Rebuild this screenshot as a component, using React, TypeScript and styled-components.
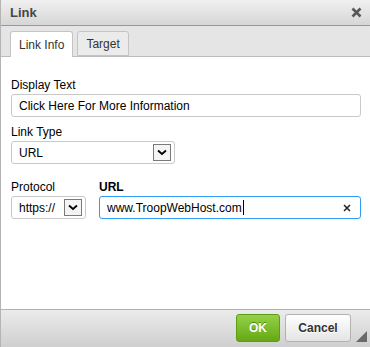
import React from 'react';
import styled, { createGlobalStyle } from 'styled-components';

const GlobalStyle = createGlobalStyle`
  html, body {
    margin: 0;
    padding: 0;
    background: #fff;
  }
  body {
    font-family: "Liberation Sans", Arial, sans-serif;
    font-size: 12px;
    color: #000;
  }
`;

const Dialog = styled.div`
  display: flex;
  flex-direction: column;
  width: 370px;
  height: 347px;
  box-sizing: border-box;
  border-left: 1px solid #b4b4b4;
  overflow: hidden;
`;

const TitleBar = styled.div`
  display: flex;
  align-items: center;
  justify-content: space-between;
  height: 25px;
  padding: 0 8px 0 9px;
  background: linear-gradient(to bottom, #f0f0f0, #d6d6d6);
  border-bottom: 1px solid #999;
`;

const Title = styled.div`
  font-size: 13px;
  font-weight: bold;
  color: #474747;
`;

const TabBar = styled.div`
  display: flex;
  align-items: flex-end;
  gap: 4px;
  height: 30px;
  padding-left: 9px;
  background: #e5e5e5;
  border-bottom: 1px solid #bcbcbc;
`;

const Tab = styled.div<{ active?: boolean }>`
  display: flex;
  align-items: center;
  box-sizing: border-box;
  height: ${({ active }) => (active ? '26px' : '25px')};
  margin-bottom: ${({ active }) => (active ? '-1px' : '0')};
  padding: 0 8px;
  border: 1px solid #c4c4c4;
  border-bottom: ${({ active }) => (active ? 'none' : '1px solid #c4c4c4')};
  border-radius: 3px 3px 0 0;
  background: ${({ active }) => (active ? '#fff' : '#ebebeb')};
  color: #333;
  font-size: 12px;
`;

const Content = styled.div`
  flex: 1;
  display: flex;
  flex-direction: column;
  padding: 21px 9px 0 10px;
  background: #fff;
`;

const Field = styled.div`
  display: flex;
  flex-direction: column;
  margin-bottom: 8px;
`;

const Label = styled.div<{ bold?: boolean }>`
  line-height: 14px;
  margin-bottom: 2px;
  font-weight: ${({ bold }) => (bold ? 'bold' : 'normal')};
  color: #000;
`;

const TextBox = styled.div<{ focused?: boolean }>`
  display: flex;
  align-items: center;
  box-sizing: border-box;
  height: 23px;
  padding: 0 7px;
  border: 1px solid ${({ focused }) => (focused ? '#2f9cf5' : '#c9c9c9')};
  border-radius: 3px;
  background: #fff;
  color: #000;
`;

const Caret = styled.span`
  display: inline-block;
  width: 1px;
  height: 15px;
  background: #000;
  margin-left: 1px;
`;

const Clear = styled.span`
  margin-left: auto;
  margin-right: 2px;
  display: flex;
`;

const Select = styled.div<{ width: number }>`
  display: flex;
  align-items: center;
  justify-content: space-between;
  box-sizing: border-box;
  width: ${({ width }) => width}px;
  height: 23px;
  padding: 0 3px 0 7px;
  border: 1px solid #c9c9c9;
  border-radius: 3px;
  background: #fff;
`;

const ArrowBox = styled.span`
  display: flex;
  align-items: center;
  justify-content: center;
  box-sizing: border-box;
  width: 18px;
  height: 17px;
  border: 1px solid #7a7a7a;
  background: #f4f4f4;
`;

const Row = styled.div`
  display: flex;
  gap: 13px;
  margin-top: 8px;
`;

const Grow = styled(Field)`
  flex: 1;
`;

const Footer = styled.div`
  display: flex;
  align-items: flex-end;
  justify-content: flex-end;
  gap: 5px;
  height: 38px;
  padding: 0 3px 5px 0;
  box-sizing: border-box;
  background: linear-gradient(to bottom, #ebebeb, #cfcfcf);
  border-top: 1px solid #b2b2b2;
`;

const Button = styled.div<{ primary?: boolean }>`
  display: flex;
  align-items: center;
  justify-content: center;
  box-sizing: border-box;
  height: 28px;
  padding: 0 12px;
  border-radius: 3px;
  font-weight: bold;
  font-size: 12px;
  border: 1px solid ${({ primary }) => (primary ? '#5d9d17' : '#b2b2b2')};
  background: ${({ primary }) =>
    primary
      ? 'linear-gradient(to bottom, #94d14a, #65a812)'
      : 'linear-gradient(to bottom, #ffffff, #e4e4e4)'};
  color: ${({ primary }) => (primary ? '#fff' : '#333')};
  text-shadow: ${({ primary }) => (primary ? '0 -1px 0 #4e8a0c' : '0 1px 0 #fff')};
`;

const OkButton = styled(Button)`
  width: 44px;
`;

const CancelButton = styled(Button)`
  width: 66px;
`;

const Grip = styled.svg`
  display: block;
`;

const Chevron = () => (
  <svg width="10" height="7" viewBox="0 0 10 7">
    <path d="M1 1.5 L5 5 L9 1.5" fill="none" stroke="#000" strokeWidth="1.8" />
  </svg>
);

const App = () => {
  return (
    <>
      <GlobalStyle />
      <Dialog>
        <TitleBar>
          <Title>Link</Title>
          <svg width="11" height="11" viewBox="0 0 11 11">
            <path d="M1.5 1.5 L9.5 9.5 M9.5 1.5 L1.5 9.5" stroke="#585858" strokeWidth="2.6" />
          </svg>
        </TitleBar>
        <TabBar>
          <Tab active>Link Info</Tab>
          <Tab>Target</Tab>
        </TabBar>
        <Content>
          <Field>
            <Label>Display Text</Label>
            <TextBox>Click Here For More Information</TextBox>
          </Field>
          <Field>
            <Label>Link Type</Label>
            <Select width={164}>
              URL
              <ArrowBox>
                <Chevron />
              </ArrowBox>
            </Select>
          </Field>
          <Row>
            <Field>
              <Label>Protocol</Label>
              <Select width={75}>
                https://
                <ArrowBox>
                  <Chevron />
                </ArrowBox>
              </Select>
            </Field>
            <Grow>
              <Label bold>URL</Label>
              <TextBox focused>
                www.TroopWebHost.com
                <Caret />
                <Clear>
                  <svg width="8" height="8" viewBox="0 0 8 8">
                    <path d="M1 1 L7 7 M7 1 L1 7" stroke="#222" strokeWidth="1.5" />
                  </svg>
                </Clear>
              </TextBox>
            </Grow>
          </Row>
        </Content>
        <Footer>
          <OkButton primary>OK</OkButton>
          <CancelButton>Cancel</CancelButton>
          <Grip width="11" height="11" viewBox="0 0 11 11">
            <path d="M11 0 L11 11 L0 11 Z" fill="#6a6a6a" />
          </Grip>
        </Footer>
      </Dialog>
    </>
  );
};

export default App;
